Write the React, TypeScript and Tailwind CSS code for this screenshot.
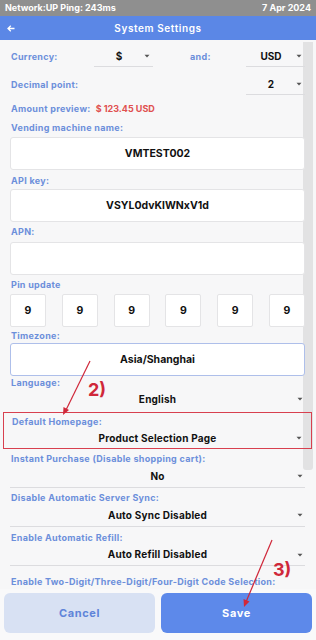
import React from "react";

const FONT = { fontFamily: "Inter, 'Noto Sans', sans-serif" };

const Caret = () => (
    <svg width="6" height="4" viewBox="0 0 6 4" className="shrink-0">
        <path d="M0.5 0.8 L5.5 0.8 L3 3.4 Z" fill="#555" />
    </svg>
);

const Label: React.FC<{ children: React.ReactNode; className?: string }> = ({ children, className }) => (
    <p className={"text-[9px] font-bold tracking-[0.3px] text-[#6c8fdb] leading-[12px] " + (className ?? "")}>
        {children}
    </p>
);

const TextBox: React.FC<{ value: string; focused?: boolean }> = ({ value, focused }) => (
    <div
        className={
            "flex h-[33px] items-center justify-center rounded-[3px] bg-white text-[10.5px] font-bold text-[#111] " +
            (focused ? "border border-[#aebfea]" : "border border-[#e4e4e6]")
        }
    >
        {value}
    </div>
);

const FullSelect: React.FC<{ value: string; line?: boolean; h: string }> = ({ value, line = true, h }) => (
    <div className={"relative flex items-center justify-center " + h + (line ? " border-b border-[#dcdcdf]" : "")}>
        <span className="text-[10px] font-bold tracking-[0.2px] text-[#111]">{value}</span>
        <span className="absolute right-[2px] top-1/2 -translate-y-1/2">
            <Caret />
        </span>
    </div>
);

const SmallSelect: React.FC<{ value: string }> = ({ value }) => (
    <div className="flex h-[21px] w-[59px] items-center border-b border-[#dcdcdf] pr-[3px]">
        <span className="flex-1 text-center text-[10px] font-bold text-[#111]">{value}</span>
        <Caret />
    </div>
);

export default function App() {
    const pins = ["9", "9", "9", "9", "9", "9"];
    return (
        <div className="relative flex h-[640px] w-[316px] flex-col overflow-hidden bg-[#f7f7f8]" style={FONT}>
            {/* status bar */}
            <div className="flex h-[16px] items-center justify-between bg-[#8f8f8f] px-[5px] text-[9px] font-bold text-white">
                <span>Network:UP Ping: 243ms</span>
                <span>7 Apr 2024</span>
            </div>
            {/* header */}
            <div className="relative flex h-[24px] items-center justify-center bg-[#5b87e6]">
                <svg width="8" height="7" viewBox="0 0 8 7" className="absolute left-[7px] top-[9px]">
                    <path d="M7.5 3.5 H1.2 M3.8 0.8 L1 3.5 L3.8 6.2" stroke="white" strokeWidth="1.3" fill="none" />
                </svg>
                <span className="text-[10px] font-semibold tracking-[0.6px] text-white">System Settings</span>
            </div>

            {/* scroll area */}
            <div className="relative flex-1 overflow-hidden">
                <div className="absolute right-[3px] top-[2px] h-[428px] w-[10px] rounded-b-[3px] bg-[#e2e2e3]" />
                <div className="relative flex flex-col pl-[10px] pr-[11px]">
                    {/* currency */}
                    <div className="mt-[6px] flex h-[21px] items-center">
                        <Label className="w-[84px] pl-[1px]">Currency:</Label>
                        <SmallSelect value="$" />
                        <Label className="ml-[37px] w-[56px]">and:</Label>
                        <SmallSelect value="USD" />
                    </div>
                    <div className="mt-[7px] flex h-[21px] items-center justify-between">
                        <Label className="pl-[1px]">Decimal point:</Label>
                        <SmallSelect value="2" />
                    </div>
                    <div className="mt-[8px] flex h-[12px] items-center gap-[5px] pl-[1px]">
                        <Label>Amount preview:</Label>
                        <span className="text-[9px] font-bold text-[#e05050]">$ 123.45 USD</span>
                    </div>
                    <Label className="mt-[7px] pl-[1px]">Vending machine name:</Label>
                    <div className="mt-[3px]">
                        <TextBox value="VMTEST002" />
                    </div>
                    <Label className="mt-[5px] pl-[1px]">API key:</Label>
                    <div className="mt-[2px]">
                        <TextBox value="VSYL0dvKlWNxV1d" />
                    </div>
                    <Label className="mt-[4px] pl-[1px]">APN:</Label>
                    <div className="mt-[4px]">
                        <TextBox value="" />
                    </div>
                    <Label className="mt-[4px] pl-[1px]">Pin update</Label>
                    <div className="mt-[3px] flex justify-between">
                        {pins.map((p, i) => (
                            <div
                                key={i}
                                className="flex h-[33px] w-[36px] items-center justify-center rounded-[2px] border border-[#e4e4e6] bg-white text-[10.5px] font-bold text-[#111]"
                            >
                                {p}
                            </div>
                        ))}
                    </div>
                    <Label className="mt-[3px] pl-[1px]">Timezone:</Label>
                    <div className="mt-[1px]">
                        <TextBox value="Asia/Shanghai" focused />
                    </div>
                    <Label className="mt-[1px] pl-[1px]">Language:</Label>
                    <div className="mt-[2px]">
                        <FullSelect value="English" line={false} h="h-[16px]" />
                    </div>
                    {/* highlighted */}
                    <div className="relative -mx-[7px] mt-[5px] border-[length:1.5px] border-solid border-[#d8404f] px-[7px] pt-[3px]">
                        <Label className="pl-[1px]">Default Homepage:</Label>
                        <FullSelect value="Product Selection Page" line={false} h="h-[20px]" />
                    </div>
                    <Label className="mt-[4px] pl-[1px]">Instant Purchase (Disable shopping cart):</Label>
                    <FullSelect value="No" h="h-[23px]" />
                    <Label className="mt-[4px] pl-[1px]">Disable Automatic Server Sync:</Label>
                    <FullSelect value="Auto Sync Disabled" h="h-[23px]" />
                    <Label className="mt-[5px] pl-[1px]">Enable Automatic Refill:</Label>
                    <FullSelect value="Auto Refill Disabled" h="h-[22px]" />
                    <Label className="mt-[10px] pl-[1px]">Enable Two-Digit/Three-Digit/Four-Digit Code Selection:</Label>
                </div>
            </div>

            {/* buttons */}
            <div className="flex h-[51px] gap-[6px] bg-[#f9f9fa] px-[4px] pt-[4px]">
                <button className="h-[40px] flex-1 rounded-[6px] bg-[#d8e1f3] text-[11px] font-bold tracking-[0.6px] text-[#5f84d9]">
                    Cancel
                </button>
                <button className="h-[40px] flex-1 rounded-[6px] bg-[#5d89ea] text-[11px] font-bold tracking-[0.6px] text-white">
                    Save
                </button>
            </div>

            {/* annotations */}
            <svg className="pointer-events-none absolute left-0 top-0" width="316" height="640">
                <line x1="90" y1="361" x2="66" y2="410" stroke="#d0283a" strokeWidth="1.2" />
                <path d="M63 415 L63.5 407 L69 410 Z" fill="#d0283a" />
                <line x1="272" y1="540" x2="246" y2="602" stroke="#d0283a" strokeWidth="1.2" />
                <path d="M244 607 L243.5 599 L249.5 601.5 Z" fill="#d0283a" />
            </svg>
            <span className="pointer-events-none absolute left-[88px] top-[376px] text-[18px] font-bold text-[#d0283a]">2)</span>
            <span className="pointer-events-none absolute left-[273px] top-[556px] text-[18px] font-bold text-[#d0283a]">3)</span>
        </div>
    );
}
